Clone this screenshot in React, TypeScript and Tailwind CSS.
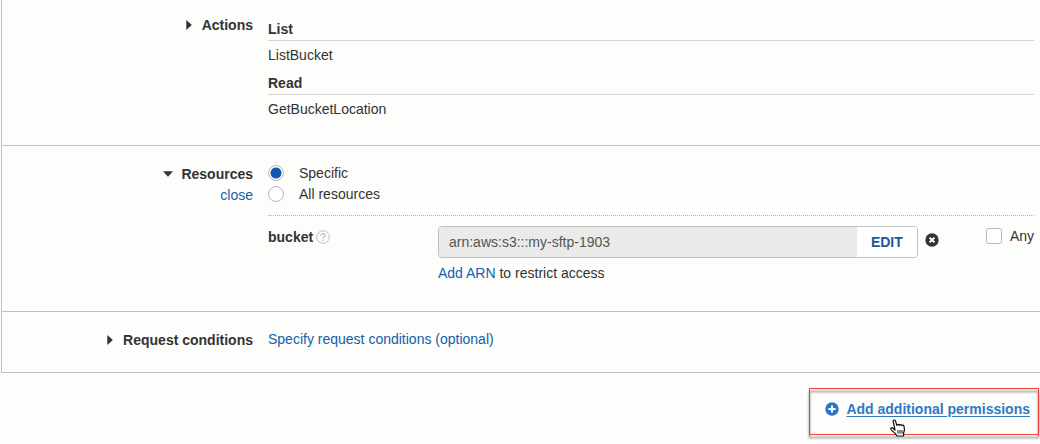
import type { ReactNode } from "react";

const linkClass = "cursor-pointer text-[#1160ac] hover:underline";

function Caret({ open = false }: { open?: boolean }) {
  return open ? (
    <svg className="h-[6px] w-[10px]" viewBox="0 0 10 6" fill="#333" aria-hidden="true">
      <path d="M0 0.3h10L5 5.8z" />
    </svg>
  ) : (
    <svg className="h-[10px] w-[6px]" viewBox="0 0 6 10" fill="#333" aria-hidden="true">
      <path d="M0.3 0v10L5.8 5z" />
    </svg>
  );
}

function Section({
  title,
  open = false,
  aside,
  className,
  labelClass,
  children,
}: {
  title: string;
  open?: boolean;
  aside?: ReactNode;
  className: string;
  labelClass?: string;
  children: ReactNode;
}) {
  return (
    <section
      className={`grid grid-cols-[251px_minmax(0,1fr)] gap-x-[15px] border-b border-[#bfbfbf] pr-1.5 ${className}`}
    >
      <div className={`flex flex-col items-end ${labelClass ?? ""}`}>
        <button type="button" aria-expanded={open} className="flex cursor-pointer items-center font-bold">
          <Caret open={open} />
          <span className={open ? "ml-2" : "ml-[10px]"}>{title}</span>
        </button>
        {aside}
      </div>
      <div>{children}</div>
    </section>
  );
}

function ActionGroup({ title, action }: { title: string; action: string }) {
  return (
    <div>
      <h3 className="border-b border-[#d5d5d5] pb-px font-bold">{title}</h3>
      <p className="pt-1 pb-2">{action}</p>
    </div>
  );
}

function Radio({ label, checked = false }: { label: string; checked?: boolean }) {
  return (
    <label className="flex h-[21px] w-fit items-center">
      <input
        type="radio"
        name="resources"
        defaultChecked={checked}
        className="mr-[15px] h-4 w-4 appearance-none rounded-full border border-[#b8b8b8] bg-white checked:bg-[radial-gradient(circle,#1159b0_5px,transparent_6px)]"
      />
      {label}
    </label>
  );
}

function Pointer() {
  return (
    <svg
      className="pointer-events-none absolute top-[31px] left-[81px] h-[18px] w-[16px]"
      viewBox="0 0 16 18"
      aria-hidden="true"
    >
      <path
        d="M5 11 3.3 3.2C2.7.7 5 .2 5.6 2.3l1.2 4.2c.3-1.5 2.1-1.4 2.4-.1.4-1.2 2.1-1 2.4.3.7-1 2.2-.6 2.4.7l.5 3.6-.9 3v3H6.8L5.4 14.6 1.5 11.1C-.2 9.2 1.7 8 3 9.2z"
        fill="white"
        stroke="#111"
        strokeWidth="1.2"
        strokeLinejoin="round"
      />
      <path d="M8 11v3.7M10 11v3.7M12 11v3.7" stroke="#111" />
    </svg>
  );
}

export default function App() {
  return (
    <main className="min-h-screen bg-[#fdfdfb] pl-px font-['Liberation_Sans',Arial,sans-serif] text-[14px] leading-5 text-[#333]">
      <div className="border-l border-[#bfbfbf]">
        <Section title="Actions" className="pt-[15px] pb-[18px]">
          <div className="pt-1">
            <ActionGroup title="List" action="ListBucket" />
            <ActionGroup title="Read" action="GetBucketLocation" />
          </div>
        </Section>

        <Section
          title="Resources"
          open
          className="pt-4 pb-7"
          labelClass="pt-0.5 gap-px"
          aside={
            <button type="button" className={linkClass}>
              close
            </button>
          }
        >
          <fieldset className="border-b border-dotted border-[#b5b5b5] pb-[11px]">
            <Radio label="Specific" checked />
            <Radio label="All resources" />
          </fieldset>
          <div className="grid grid-cols-[170px_minmax(0,1fr)_auto] pt-[10px]">
            <div className="flex h-[22px] items-center gap-[3px] font-bold">
              <label htmlFor="arn">bucket</label>
              <button type="button" aria-label="About bucket">
                <svg className="h-[14px] w-[14px]" viewBox="0 0 14 14" fill="none" stroke="#bdbdbd" aria-hidden="true">
                  <circle cx="7" cy="7" r="6.3" />
                  <path d="M4.9 5.5C4.9 3 9.1 3 9.1 5.4 9.1 6.8 7.1 6.8 7.1 8.5M7.1 9.6v1.4" strokeWidth="1.4" />
                </svg>
              </button>
            </div>
            <div>
              <div className="flex items-center">
                <div className="flex h-8 min-w-0 flex-1 overflow-hidden rounded border border-[#bfbfbf]">
                  <input
                    id="arn"
                    readOnly
                    value="arn:aws:s3:::my-sftp-1903"
                    className="min-w-0 flex-1 bg-[#eaeae9] px-[10px] text-[#555] outline-none"
                  />
                  <button type="button" className="w-[60px] cursor-pointer bg-white font-bold text-[#1d5797]">
                    EDIT
                  </button>
                </div>
                <button type="button" aria-label="Remove ARN" className="mr-[47px] ml-[7px] cursor-pointer pb-1">
                  <svg className="h-[14px] w-[14px]" viewBox="0 0 14 14" aria-hidden="true">
                    <circle cx="7" cy="7" r="6.7" fill="#333" />
                    <path d="m4.6 4.6 4.8 4.8m0-4.8L4.6 9.4" stroke="white" strokeWidth="2" />
                  </svg>
                </button>
              </div>
              <p className="pt-[5px]">
                <button type="button" className={linkClass}>
                  Add ARN
                </button>{" "}
                to restrict access
              </p>
            </div>
            <label className="flex h-5 items-center gap-2">
              <input
                type="checkbox"
                className="h-4 w-4 appearance-none rounded-[3px] border border-[#b8b8b8] bg-white checked:bg-[#1159b0]"
              />
              Any
            </label>
          </div>
        </Section>

        <Section title="Request conditions" className="pt-[17px] pb-[22px]" labelClass="pt-px">
          <button type="button" className={linkClass}>
            Specify request conditions (optional)
          </button>
        </Section>
      </div>

      <div className="flex justify-end pt-[15px] pr-px">
        <div className="relative">
          <div className="absolute inset-0 border border-[#f0443a] drop-shadow-[0_3px_1px_rgba(60,60,60,0.8)]" />
          <div className="relative pt-[11px] pr-[9px] pb-4 pl-4">
            <button type="button" className="flex cursor-pointer items-center gap-[7px] font-bold text-[#2f79c4]">
              <svg className="h-[14px] w-[14px]" viewBox="0 0 14 14" aria-hidden="true">
                <circle cx="7" cy="7" r="6.7" fill="#2874c9" />
                <path d="M7 3.4v7.2M3.4 7h7.2" stroke="white" strokeWidth="2" />
              </svg>
              <span className="underline underline-offset-2">Add additional permissions</span>
            </button>
          </div>
          <Pointer />
        </div>
      </div>
    </main>
  );
}
